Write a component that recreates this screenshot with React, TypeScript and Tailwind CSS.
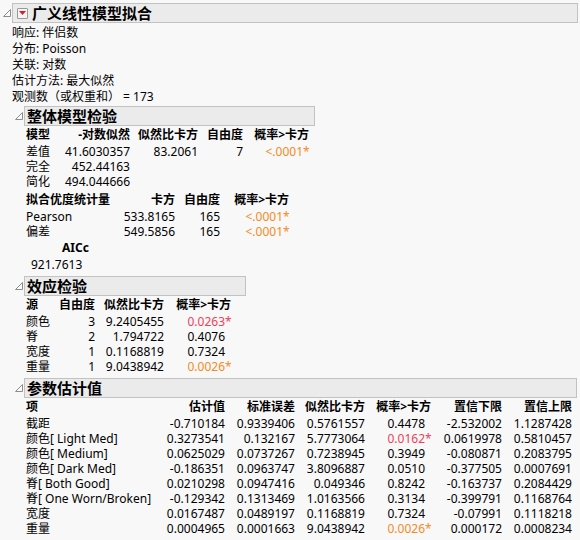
import type { ReactNode } from "react";

const FONT = { fontFamily: '"Noto Sans", "Noto Sans CJK SC", sans-serif' };

type Cell = string | { v: string; star?: "red" | "orange"; pad?: boolean };

function Disclosure() {
  return (
    <svg width="8" height="8" viewBox="0 0 8 8" className="block">
      <path d="M7.5 0.5 L7.5 7.5 L0.5 7.5 Z" fill="#fbfbfb" stroke="#8c8c8c" strokeWidth="1" />
    </svg>
  );
}

function MenuIcon() {
  return (
    <span className="flex h-[11px] w-[11px] items-center justify-center border border-[#9a9a9a] bg-[#f4f4f4] rounded-[1px]">
      <svg width="7" height="4" viewBox="0 0 7 4" className="block">
        <path d="M0 0 L7 0 L3.5 4 Z" fill="#d4202c" />
      </svg>
    </span>
  );
}

function Header({ title, width, top }: { title: string; width: string; top?: boolean }) {
  return (
    <div className={`flex items-center ${top ? "pl-[3px]" : "pl-[15px]"}`}>
      <span className="w-[9px]">
        <Disclosure />
      </span>
      <div
        className={`flex h-[20px] items-center border border-[#c2c2c2] bg-[#ebebeb] ${width} ${
          top ? "pl-[4px] gap-[4px]" : "pl-[2px]"
        }`}
      >
        {top && <MenuIcon />}
        <span className="text-[15px] font-bold leading-[18px] text-black">{title}</span>
      </div>
    </div>
  );
}

function Val({ c }: { c: Cell }) {
  if (typeof c === "string") return <>{c}</>;
  const color = c.star === "red" ? "text-[#ee3f5a]" : c.star === "orange" ? "text-[#f58a1f]" : "";
  return (
    <span className={color}>
      {c.v}
      {c.pad && <span className="inline-block w-[6px] text-left">{c.star ? "*" : ""}</span>}
    </span>
  );
}

function Table({ cols, head, rows }: { cols: string; head: string[]; rows: Cell[][] }) {
  return (
    <div className={`grid ${cols} pl-[26px] text-[12px] text-black`}>
      {head.map((h, i) => (
        <div key={i} className={`h-[18px] leading-[18px] font-bold whitespace-nowrap ${i ? "text-right" : ""}`}>
          {h}
        </div>
      ))}
      {rows.map((r) =>
        r.map((c, i) => (
          <div key={`${r[0]}-${i}`} className={`h-[15px] leading-[15px] whitespace-nowrap ${i ? "text-right" : ""}`}>
            <Val c={c} />
          </div>
        ))
      )}
    </div>
  );
}

function Section({ children }: { children: ReactNode }) {
  return <div>{children}</div>;
}

const p = (v: string, star?: "red" | "orange"): Cell => ({ v, star, pad: true });

export default function App() {
  return (
    <div className="h-[540px] w-[580px] overflow-hidden bg-[#f8f8f8] pt-[3px] text-black" style={FONT}>
      <Header title="广义线性模型拟合" width="w-[566px]" top />
      <div className="mt-[2px] pl-[12px] text-[12px] leading-[16px]">
        <div>响应: 伴侣数</div>
        <div>分布: Poisson</div>
        <div>关联: 对数</div>
        <div>估计方法: 最大似然</div>
        <div>观测数（或权重和） = 173</div>
      </div>

      <Section>
        <div className="mt-[1px]">
          <Header title="整体模型检验" width="w-[291px]" />
        </div>
        <Table
          cols="grid-cols-[36px_68px_68px_45px_66px]"
          head={["模型", "-对数似然", "似然比卡方", "自由度", "概率>卡方"]}
          rows={[
            ["差值", "41.6030357", "83.2061", "7", p("<.0001", "orange")],
            ["完全", "452.44163", "", "", ""],
            ["简化", "494.044666", "", "", ""],
          ]}
        />
        <div className="mt-[2px]">
          <Table
            cols="grid-cols-[84px_65px_45px_69px]"
            head={["拟合优度统计量", "卡方", "自由度", "概率>卡方"]}
            rows={[
              ["Pearson", "533.8165", "165", p("<.0001", "orange")],
              ["偏差", "549.5856", "165", p("<.0001", "orange")],
            ]}
          />
        </div>
        <div className="text-[12px]">
          <div className="h-[18px] pl-[62px] font-bold leading-[18px]">AICc</div>
          <div className="h-[15px] pl-[31px] leading-[15px]">921.7613</div>
        </div>
      </Section>

      <Section>
        <div className="mt-[4px]">
          <Header title="效应检验" width="w-[222px]" />
        </div>
        <Table
          cols="grid-cols-[29px_40px_69px_67px]"
          head={["源", "自由度", "似然比卡方", "概率>卡方"]}
          rows={[
            ["颜色", "3", "9.2405455", p("0.0263", "red")],
            ["脊", "2", "1.794722", p("0.4076")],
            ["宽度", "1", "0.1168819", p("0.7324")],
            ["重量", "1", "9.0438942", p("0.0026", "orange")],
          ]}
        />
      </Section>

      <Section>
        <div className="mt-[4px]">
          <Header title="参数估计值" width="w-[553px]" />
        </div>
        <Table
          cols="grid-cols-[130px_69px_70px_70px_66px_71px_70px]"
          head={["项", "估计值", "标准误差", "似然比卡方", "概率>卡方", "置信下限", "置信上限"]}
          rows={[
            ["截距", "-0.710184", "0.9339406", "0.5761557", p("0.4478"), "-2.532002", "1.1287428"],
            ["颜色[ Light Med]", "0.3273541", "0.132167", "5.7773064", p("0.0162", "red"), "0.0619978", "0.5810457"],
            ["颜色[ Medium]", "0.0625029", "0.0737267", "0.7238945", p("0.3949"), "-0.080871", "0.2083795"],
            ["颜色[ Dark Med]", "-0.186351", "0.0963747", "3.8096887", p("0.0510"), "-0.377505", "0.0007691"],
            ["脊[ Both Good]", "0.0210298", "0.0947416", "0.049346", p("0.8242"), "-0.163737", "0.2084429"],
            ["脊[ One Worn/Broken]", "-0.129342", "0.1313469", "1.0163566", p("0.3134"), "-0.399791", "0.1168764"],
            ["宽度", "0.0167487", "0.0489197", "0.1168819", p("0.7324"), "-0.07991", "0.1118218"],
            ["重量", "0.0004965", "0.0001663", "9.0438942", p("0.0026", "orange"), "0.000172", "0.0008234"],
          ]}
        />
      </Section>
    </div>
  );
}
